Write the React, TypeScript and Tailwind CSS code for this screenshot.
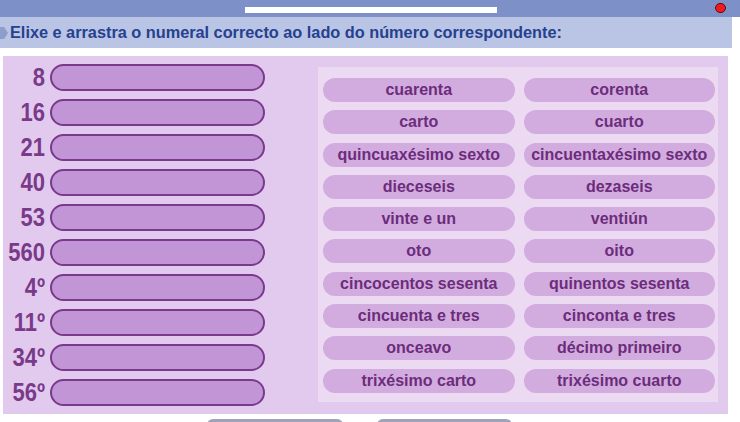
const numbers = ["8", "16", "21", "40", "53", "560", "4º", "11º", "34º", "56º"];

const words: [string, string][] = [
  ["cuarenta", "corenta"],
  ["carto", "cuarto"],
  ["quincuaxésimo sexto", "cincuentaxésimo sexto"],
  ["dieceseis", "dezaseis"],
  ["vinte e un", "ventiún"],
  ["oto", "oito"],
  ["cincocentos sesenta", "quinentos sesenta"],
  ["cincuenta e tres", "cinconta e tres"],
  ["onceavo", "décimo primeiro"],
  ["trixésimo carto", "trixésimo cuarto"],
];

function Arrow() {
  return (
    <svg width="8" height="12" viewBox="0 0 8 12" className="shrink-0">
      <polygon points="0,0 4,0 8,6 4,12 0,12" fill="#8e9ecb" />
    </svg>
  );
}

export default function App() {
  return (
    <div className="relative h-[422px] w-[740px] overflow-hidden bg-white font-['Liberation_Sans',Arial,sans-serif]">
      {/* top bar */}
      <div className="h-[17px] w-full bg-[#7d90c8] pl-[245px] pt-[7px]">
        <div className="h-[6px] w-[252px] bg-white" />
      </div>
      <div className="absolute right-[14px] top-[3px] h-[10px] w-[11px] rounded-full border border-[#5a1010] bg-[#ee1a1f]" />

      {/* instruction */}
      <div className="flex h-[31px] w-[732px] items-center gap-[2px] bg-[#bac4e4]">
        <Arrow />
        <p className="text-[16.3px] font-bold leading-none text-[#25418f]">
          Elixe e arrastra o numeral correcto ao lado do número correspondente:
        </p>
      </div>

      {/* activity panel */}
      <div className="ml-[3px] mt-[8px] flex h-[358px] w-[725px] bg-[#e2c9ee]">
        <div className="flex flex-col gap-[8px] pt-[8px]">
          {numbers.map((n) => (
            <div key={n} className="flex h-[27px] items-center">
              <span className="w-[42px] text-right text-[22px] font-bold leading-none text-[#7a3a8a]">
                <span className="inline-block scale-y-[1.15]">{n}</span>
              </span>
              <div className="ml-[5px] h-[27px] w-[215px] rounded-full border-2 border-[#7a3a8c] bg-[#c295d7]" />
            </div>
          ))}
        </div>

        <div className="ml-[53px] mt-[11px] grid h-[335px] w-[400px] grid-cols-2 content-start gap-x-[9px] gap-y-[8.3px] bg-[#ecdaf3] pl-[5px] pr-[3px] pt-[11px]">
          {words.flat().map((w) => (
            <div
              key={w}
              className="flex h-[24px] items-center justify-center whitespace-nowrap rounded-full bg-[#d3acdf] text-[16px] font-bold leading-none text-[#6c2c7c]"
            >
              {w}
            </div>
          ))}
        </div>
      </div>

      {/* buttons (cut off) */}
      <div className="mt-[5px] flex gap-[34px] pl-[207px]">
        <div className="h-[28px] w-[136px] rounded-t-[6px] bg-[#9ea3b8]" />
        <div className="h-[28px] w-[135px] rounded-t-[6px] bg-[#9ea3b8]" />
      </div>
    </div>
  );
}
